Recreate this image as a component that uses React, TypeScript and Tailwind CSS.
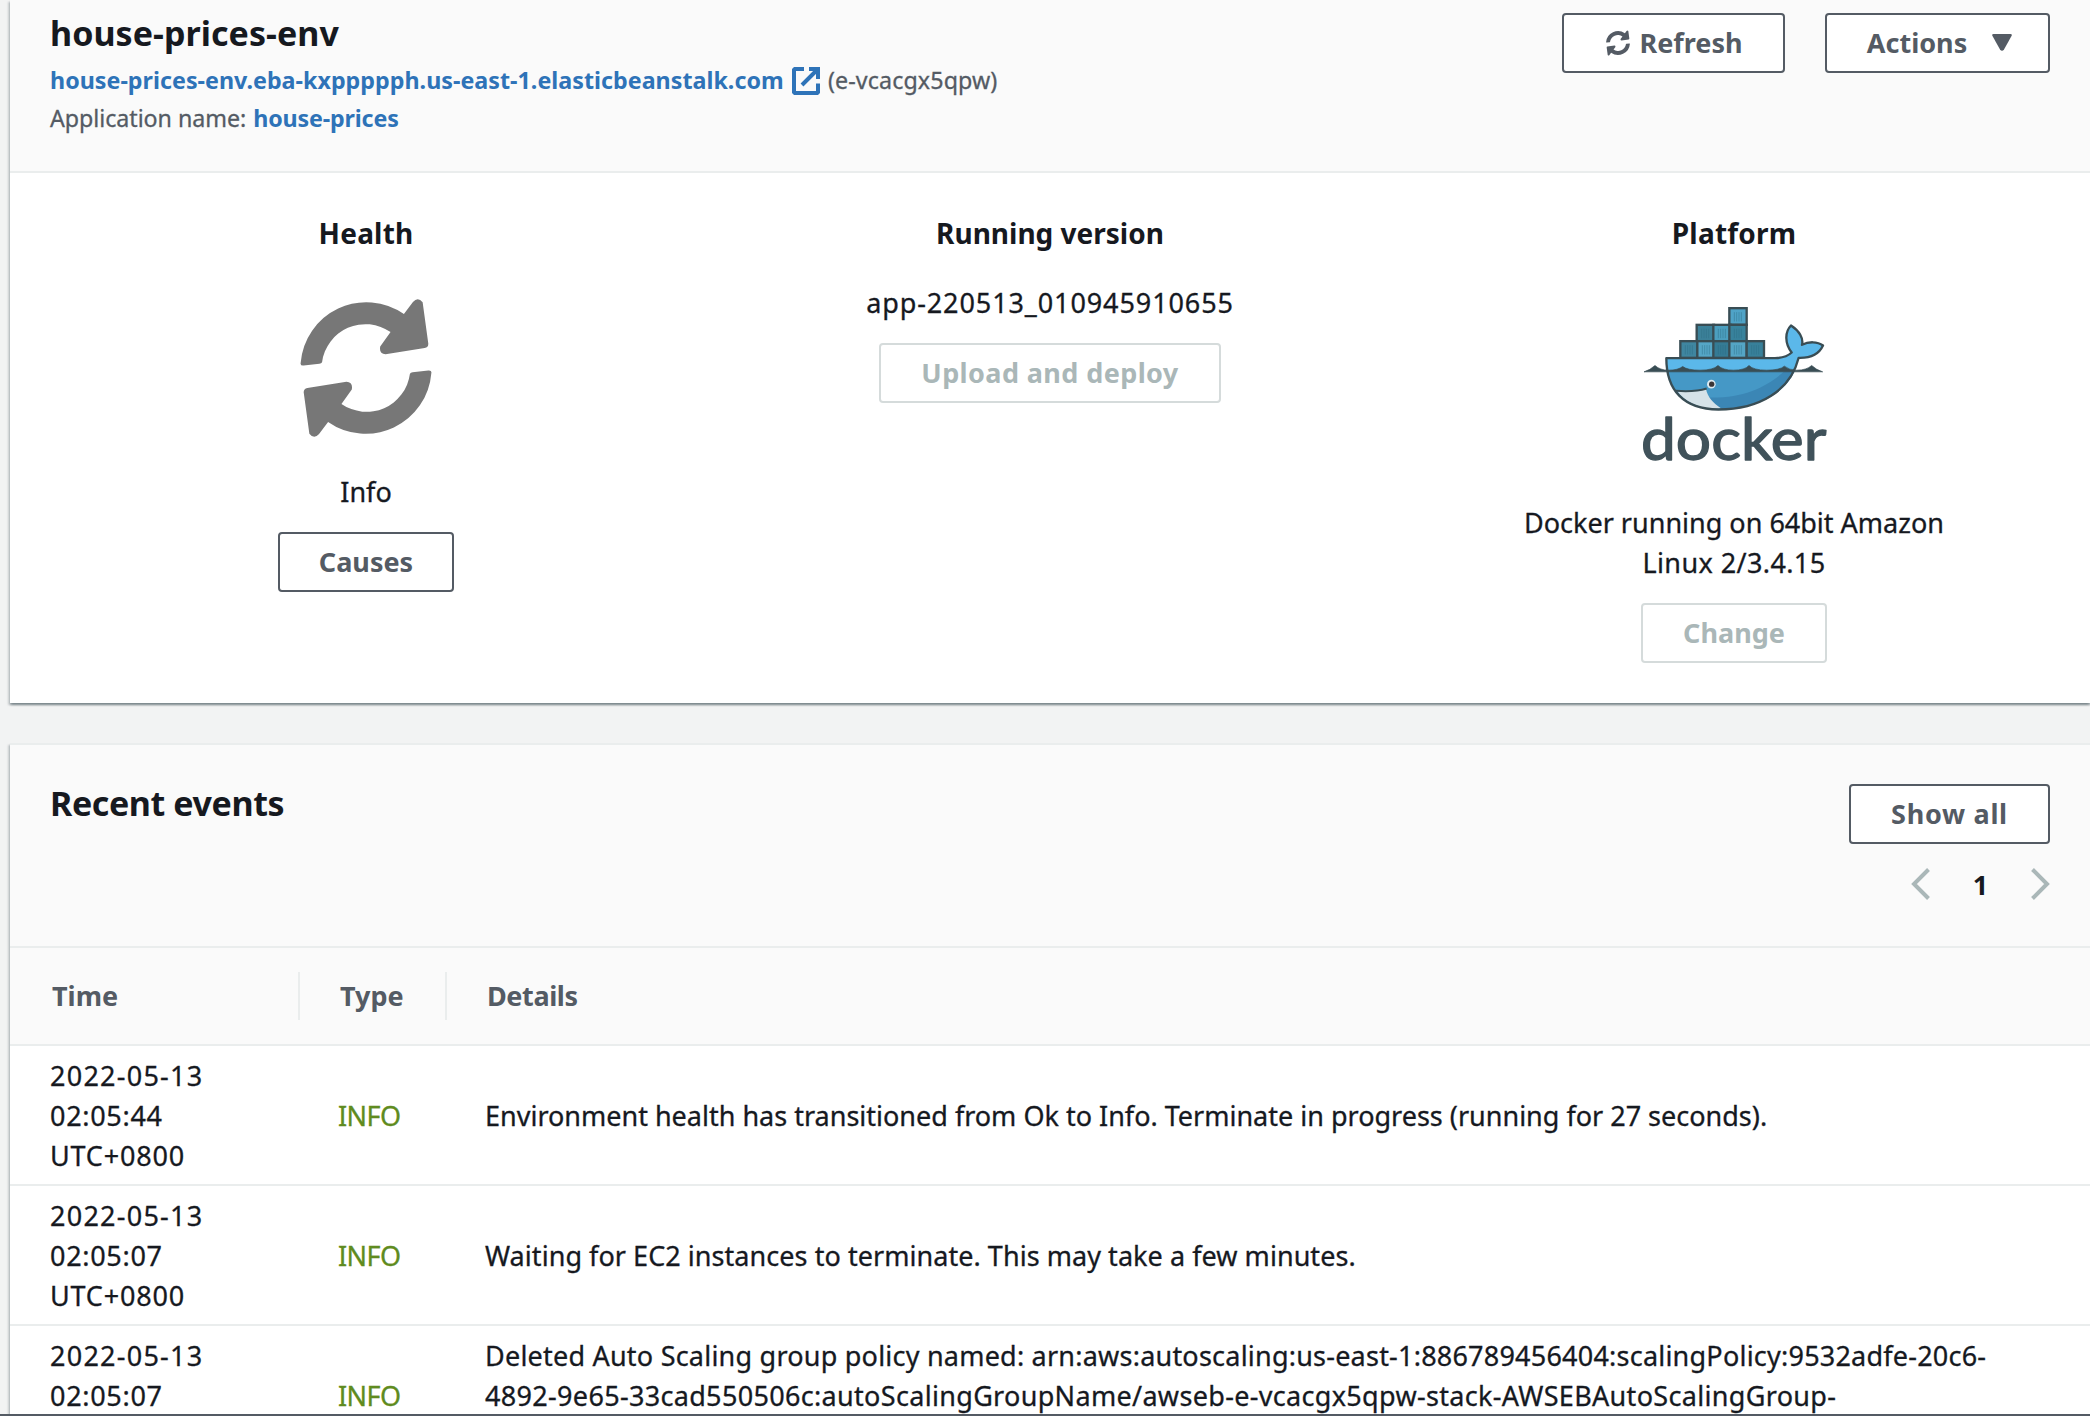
import type { ReactNode } from "react";

function SyncIcon({ className }: { className: string }) {
  const arrow =
    "M124 487 A197 197 0 0 1 433 341 L460 305 Q475 288 489 306 L506 430 Q506 441 495 443 L378 461 Q358 460 362 438 L393 395 A131 131 0 0 0 188 485 Q186 489 180 490 L133 495 Q122 496 124 487Z";
  return (
    <svg viewBox="122 296 395 413" className={className} fill="currentColor">
      <path d={arrow} />
      <path d={arrow} transform="rotate(180 319.5 502.5)" />
    </svg>
  );
}

function ExternalIcon() {
  return (
    <svg viewBox="0 0 28 28" className="h-7 w-7" fill="none" stroke="currentColor" strokeWidth="4">
      <path d="M12 2H2v24h24V16.500" strokeLinejoin="bevel" />
      <path d="M17 2h9v10M25 3L10 18" />
    </svg>
  );
}

const containers: [number, number, string][] = [
  [328, 54, "#4fa3c7"],
  [230, 104, "#3c8199"],
  [280, 104, "#4c9fbf"],
  [328, 104, "#38829c"],
  [181, 153, "#3f86a0"],
  [232, 153, "#55a6c6"],
  [280, 153, "#357b95"],
  [328, 153, "#54a5c5"],
  [380, 153, "#38809a"],
];

const whale =
  "M139 204H465Q498 203 515 187C494 160 494 125 513 106C538 122 551 145 546 164C565 154 592 153 609 166C597 192 570 204 536 203C512 300 420 358 295 358C190 356 139 300 139 204Z";

function DockerLogo() {
  return (
    <svg viewBox="66 48 552 470" className="h-[157px] w-[184px] overflow-visible">
      <g stroke="#394d54" strokeWidth="7">
        {containers.map(([x, y, fill]) => (
          <g key={x + "-" + y}>
            <rect x={x} y={y} width="52" height="50" fill={fill} />
            <path
              d={`M${x + 15} ${y + 12}v28M${x + 22} ${y + 12}v28M${x + 29} ${y + 12}v28M${x + 36} ${y + 12}v28`}
              stroke="#2c6a82"
              strokeOpacity=".5"
              strokeWidth="2.5"
            />
          </g>
        ))}
      </g>
      <path d={whale} fill="#4598c6" />
      <path
        d="M139 204H465Q498 203 515 187C494 160 494 125 513 106C538 122 551 145 546 164C565 154 592 153 609 166C597 192 570 204 536 203L522 242H141Z"
        fill="#5bb8ea"
      />
      <path d="M524 244C490 315 410 356 300 355C280 345 270 335 265 322C370 325 440 290 492 244Z" fill="#3b86b5" />
      <path d="M172 303C210 303 235 300 258 296C262 320 280 340 303 354C240 360 195 335 172 303Z" fill="#d5e2e8" />
      <path d="M168 302Q225 306 260 295" fill="none" stroke="#394d54" strokeWidth="6" />
      <path d={whale} fill="none" stroke="#394d54" strokeWidth="7" strokeLinejoin="round" />
      <path
        d="M72 245Q90 240 105 226Q120 240 145 240Q175 240 188 229Q202 240 240 240Q280 240 294 226Q308 240 340 240Q375 240 387 226Q400 240 440 240Q480 240 493 228Q508 240 530 240Q560 240 575 226Q590 240 608 245Z"
        fill="#394d54"
        stroke="#394d54"
        strokeWidth="2"
      />
      <circle cx="274" cy="282" r="13" fill="#dce9ef" />
      <circle cx="275" cy="282" r="8" fill="#3a3537" />
      <text
        x="63"
        y="509"
        textLength="556"
        lengthAdjust="spacingAndGlyphs"
        fontSize="174"
        fill="#40525a"
        stroke="#40525a"
        strokeWidth="4"
        strokeLinejoin="round"
        className="font-['Lato',sans-serif]"
      >
        docker
      </text>
    </svg>
  );
}

function Button({ children, className, disabled = false }: { children: ReactNode; className: string; disabled?: boolean }) {
  return (
    <button
      disabled={disabled}
      className={`flex h-[60px] items-center justify-center rounded-[4px] border-2 bg-white pb-px text-[27px] font-bold whitespace-nowrap ${
        disabled ? "border-[#d5dbdb] text-[#aab7b8]" : "border-[#545b64] text-[#545b64]"
      } ${className}`}
    >
      {children}
    </button>
  );
}

const card =
  "bg-white shadow-[0_2px_2px_0_rgba(0,28,36,0.3),2px_2px_2px_0_rgba(0,28,36,0.15),-2px_2px_2px_0_rgba(0,28,36,0.15)]";

const body = "[-webkit-text-stroke:0.3px_currentColor]";

type Line = { text: string; tracking: string };

const events: { time: Line[]; details: Line[] }[] = [
  {
    time: [
      { text: "2022-05-13", tracking: "tracking-[1.25px]" },
      { text: "02:05:44", tracking: "tracking-[0.7px]" },
      { text: "UTC+0800", tracking: "tracking-[0.8px]" },
    ],
    details: [
      {
        text: "Environment health has transitioned from Ok to Info. Terminate in progress (running for 27 seconds).",
        tracking: "tracking-normal",
      },
    ],
  },
  {
    time: [
      { text: "2022-05-13", tracking: "tracking-[1.25px]" },
      { text: "02:05:07", tracking: "tracking-[0.7px]" },
      { text: "UTC+0800", tracking: "tracking-[0.8px]" },
    ],
    details: [
      {
        text: "Waiting for EC2 instances to terminate. This may take a few minutes.",
        tracking: "tracking-[0.05px]",
      },
    ],
  },
  {
    time: [
      { text: "2022-05-13", tracking: "tracking-[1.25px]" },
      { text: "02:05:07", tracking: "tracking-[0.7px]" },
    ],
    details: [
      {
        text: "Deleted Auto Scaling group policy named: arn:aws:autoscaling:us-east-1:886789456404:scalingPolicy:9532adfe-20c6-",
        tracking: "tracking-[0.22px]",
      },
      {
        text: "4892-9e65-33cad550506c:autoScalingGroupName/awseb-e-vcacgx5qpw-stack-AWSEBAutoScalingGroup-",
        tracking: "tracking-[0.32px]",
      },
    ],
  },
];

function Lines({ lines }: { lines: Line[] }) {
  return (
    <>
      {lines.map((line) => (
        <div key={line.text} className={line.tracking}>
          {line.text}
        </div>
      ))}
    </>
  );
}

export default function App() {
  return (
    <div className="flex h-[1416px] w-[2090px] flex-col overflow-hidden bg-[#f2f3f3] font-['Noto_Sans',sans-serif] text-[27px] leading-10 text-[#16191f]">
      <div className="flex min-h-0 flex-1 flex-col gap-10 overflow-hidden pl-[10px]">
        <section className={`h-[703px] shrink-0 ${card}`}>
          <header className="flex h-[173px] justify-between border-b-2 border-[#eaeded] bg-[#fafafa] px-10">
            <div>
              <h1 className="mt-2 h-[50px] text-[34px] leading-[50px] font-bold tracking-[0.05px] whitespace-nowrap">
                house-prices-env
              </h1>
              <div className="mt-[3px] flex h-[38px] items-center text-[23.25px] whitespace-nowrap text-[#545b64]">
                <a className="w-[742px] font-bold tracking-[0.02px] text-[#2e73b8]">
                  house-prices-env.eba-kxppppph.us-east-1.elasticbeanstalk.com
                </a>
                <span className="mt-px mr-2 text-[#2e73b8]">
                  <ExternalIcon />
                </span>
                <span className={`tracking-[0.1px] ${body}`}>(e-vcacgx5qpw)</span>
              </div>
              <div className="flex h-[38px] items-center gap-[7px] text-[23.25px] whitespace-nowrap text-[#545b64]">
                <span className={`tracking-[-0.05px] ${body}`}>Application name:</span>
                <a className="font-bold tracking-[-0.15px] text-[#2e73b8]">house-prices</a>
              </div>
            </div>
            <div className="flex gap-10 pt-[13px]">
              <Button className="w-[223px] gap-[9px] pl-0.5">
                <SyncIcon className="h-[26px] w-6" />
                Refresh
              </Button>
              <Button className="w-[225px] gap-[25px] pl-1">
                Actions
                <svg viewBox="0 0 20 17" className="h-[17px] w-5" fill="currentColor">
                  <path d="M1.5 0h17q2 0 1 2L12 15.500q-2 2.500-4 0L.5 2q-1-2 1-2z" />
                </svg>
              </Button>
            </div>
          </header>
          <div className="grid grid-cols-[682px_686px_682px] px-[15px] pt-10 text-center">
            <div className="flex flex-col items-center">
              <h2 className="text-[28px] font-bold tracking-[0.2px]">Health</h2>
              <SyncIcon className="mt-[46px] h-[138px] w-[132px] text-[#777777]" />
              <p className={`mt-[35px] ${body}`}>Info</p>
              <Button className="mt-5 w-[176px]">Causes</Button>
            </div>
            <div className="flex flex-col items-center">
              <h2 className="text-[28px] font-bold">Running version</h2>
              <p className={`mt-[30px] tracking-[0.9px] ${body}`}>app-220513_010945910655</p>
              <Button disabled className="mt-5 w-[342px] tracking-[0.4px]">
                Upload and deploy
              </Button>
            </div>
            <div className="flex flex-col items-center">
              <h2 className="text-[28px] font-bold tracking-[0.2px]">Platform</h2>
              <div className="mt-[53px]">
                <DockerLogo />
              </div>
              <p className={`mt-10 ${body}`}>
                Docker running on 64bit Amazon
                <br />
                <span className="tracking-[0.4px]">Linux 2/3.4.15</span>
              </p>
              <Button disabled className="mt-5 w-[186px]">
                Change
              </Button>
            </div>
          </div>
        </section>

        <section className={`shrink-0 border-t-2 border-[#eaeded] ${card}`}>
          <header className="flex h-[201px] justify-between bg-[#fafafa] px-10">
            <h2 className="mt-[35px] text-[34px] leading-[46px] font-bold tracking-[-0.4px]">Recent events</h2>
            <div className="flex flex-col items-end pt-[39px]">
              <Button className="w-[201px] tracking-[0.7px]">Show all</Button>
              <div className="mt-5 flex h-10 w-[139px] items-center justify-between text-[#aab7b8]">
                <svg viewBox="0 0 19 32" className="h-8 w-[19px]" fill="none" stroke="currentColor" strokeWidth="4">
                  <path d="M17.500 1.500L3 16l14.500 14.500" />
                </svg>
                <span className="mt-0.5 font-bold text-[#16191f]">1</span>
                <svg viewBox="0 0 19 32" className="h-8 w-[19px]" fill="none" stroke="currentColor" strokeWidth="4">
                  <path d="M1.500 1.500L16 16L1.500 30.500" />
                </svg>
              </div>
            </div>
          </header>
          <div className="flex h-[100px] items-center border-y-2 border-[#eaeded] bg-[#fafafa] font-bold text-[#545b64]">
            <div className="h-12 w-[290px] border-r-2 border-[#eaeded] pl-[42px] leading-12">Time</div>
            <div className="h-12 w-[147px] border-r-2 border-[#eaeded] pl-10 leading-12">Type</div>
            <div className="h-12 pl-10 leading-12 tracking-[-0.4px]">Details</div>
          </div>
          {events.map((event, i) => (
            <div
              key={i}
              className={`flex border-b-2 border-[#eaeded] pt-[10px] ${body} ${i === 2 ? "h-[92px]" : "h-[140px]"}`}
            >
              <div className="w-[288px] pl-10">
                <Lines lines={event.time} />
              </div>
              <div className="w-[147px] pt-10 pl-10 tracking-[-0.6px] text-[#5f8b20]">INFO</div>
              <div className={`pl-10 whitespace-nowrap ${event.details.length === 1 ? "pt-10" : ""}`}>
                <Lines lines={event.details} />
              </div>
            </div>
          ))}
        </section>
      </div>
      <div className="h-[2px] shrink-0 bg-[#545b64]" />
    </div>
  );
}
